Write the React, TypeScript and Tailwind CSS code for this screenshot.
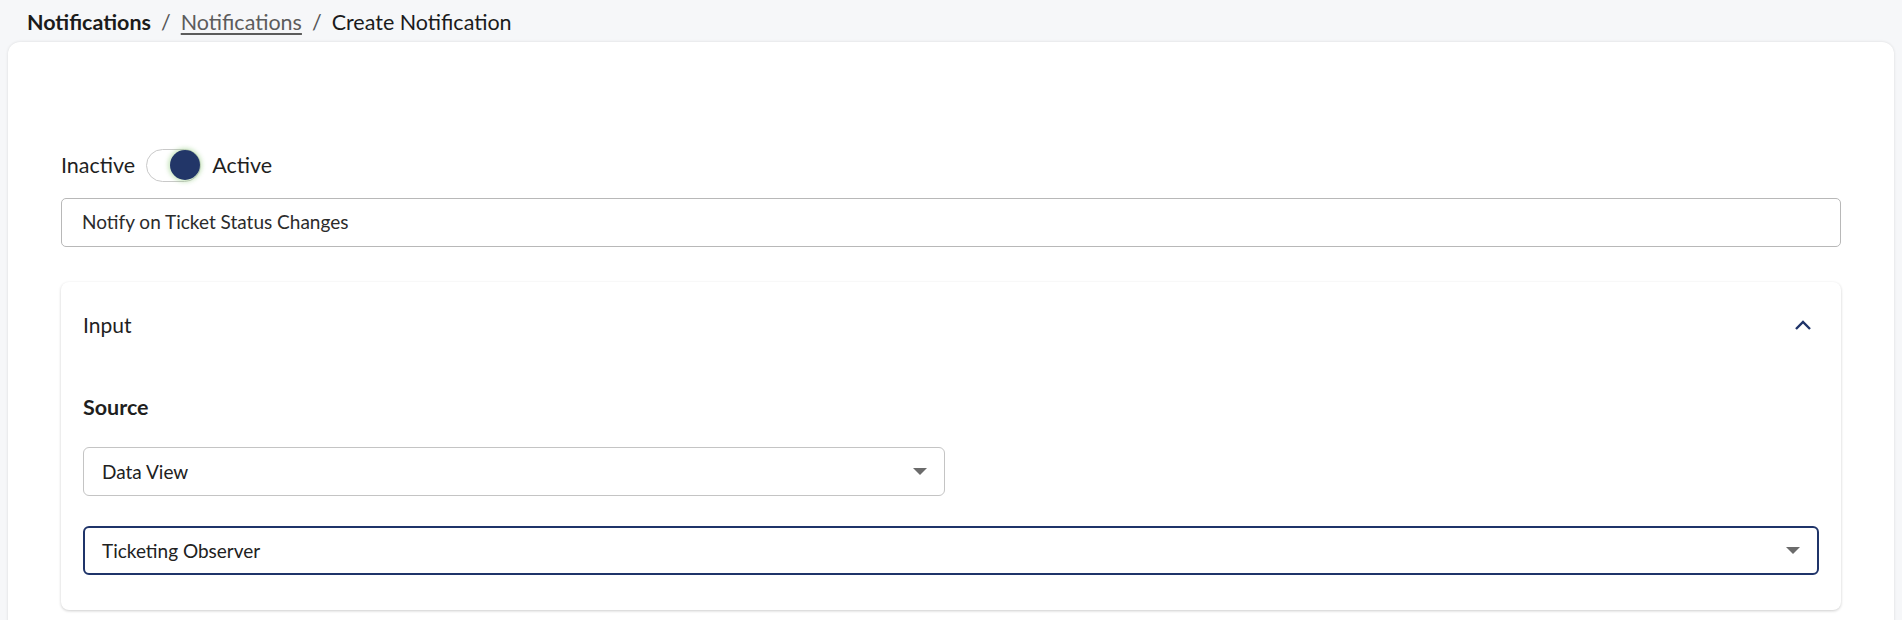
import { useState } from "react";

const FONT = { fontFamily: "Lato, 'Noto Sans', sans-serif" };

function Caret() {
  return (
    <svg width="14" height="7" viewBox="0 0 14 7" className="shrink-0">
      <path d="M0 0h14L7 7z" fill="#6b6b6b" />
    </svg>
  );
}

function Select({ value, focused, className }: { value: string; focused?: boolean; className?: string }) {
  return (
    <div
      className={`flex h-[49px] items-center justify-between rounded-[6px] bg-white pl-[17px] pr-[17px] text-[19px] text-[#212121] ${
        focused ? "border-2 border-[#1f3469]" : "border border-[#c4c4c4] pl-[18px]"
      } ${className ?? ""}`}
    >
      <span>{value}</span>
      <Caret />
    </div>
  );
}

export default function App() {
  const [active, setActive] = useState(true);

  return (
    <div className="min-h-screen bg-[#f6f7f9] px-[8px]" style={FONT}>
      {/* breadcrumb */}
      <div className="flex h-[42px] items-center gap-[10px] pl-[19px] pt-[3px] text-[21.5px] text-[#1b1b1b]">
        <span className="font-bold">Notifications</span>
        <span className="text-[#555]">/</span>
        <a className="text-[#5c5c5c] underline underline-offset-[3px]">Notifications</a>
        <span className="text-[#555]">/</span>
        <span>Create Notification</span>
      </div>

      <div className="rounded-xl bg-white px-[53px] pb-[40px] pt-[107px] shadow-[0_0_3px_rgba(0,0,0,0.12)]">
        {/* status toggle */}
        <div className="flex items-center gap-[11px] text-[21.5px] text-[#1f1f1f]">
          <span>Inactive</span>
          <button
            onClick={() => setActive(!active)}
            className="relative h-[33px] w-[55px] rounded-full border border-[#c9c9c9] bg-white"
          >
            <span
              className={`absolute top-[0px] h-[30px] w-[30px] rounded-full bg-[#223668] shadow-[0_0_4px_2px_rgba(140,200,120,0.45)] ${
                active ? "right-[0px]" : "left-[0px]"
              }`}
            />
          </button>
          <span>Active</span>
        </div>

        {/* name */}
        <div className="mt-[16px] flex h-[49px] items-center rounded-[5px] border border-[#b8b8b8] px-[20px] text-[19px] text-[#2b2b2b]">
          Notify on Ticket Status Changes
        </div>

        {/* input accordion */}
        <div className="mt-[35px] rounded-[8px] bg-white px-[22px] pb-[35px] shadow-[0_1px_3px_rgba(0,0,0,0.2)]">
          <div className="flex h-[86px] items-center justify-between text-[21px] text-[#1f1f1f]">
            <span>Input</span>
            <svg width="18" height="11" viewBox="0 0 18 11" className="mr-[7px]">
              <path d="M2 9l7-7 7 7" fill="none" stroke="#1f3469" strokeWidth="2.4" />
            </svg>
          </div>
          <div className="pt-[23px] text-[21.5px] font-bold text-[#1f1f1f]">Source</div>
          <Select value="Data View" className="mt-[24px] w-[862px]" />
          <Select value="Ticketing Observer" focused className="mt-[30px]" />
        </div>
      </div>
    </div>
  );
}
